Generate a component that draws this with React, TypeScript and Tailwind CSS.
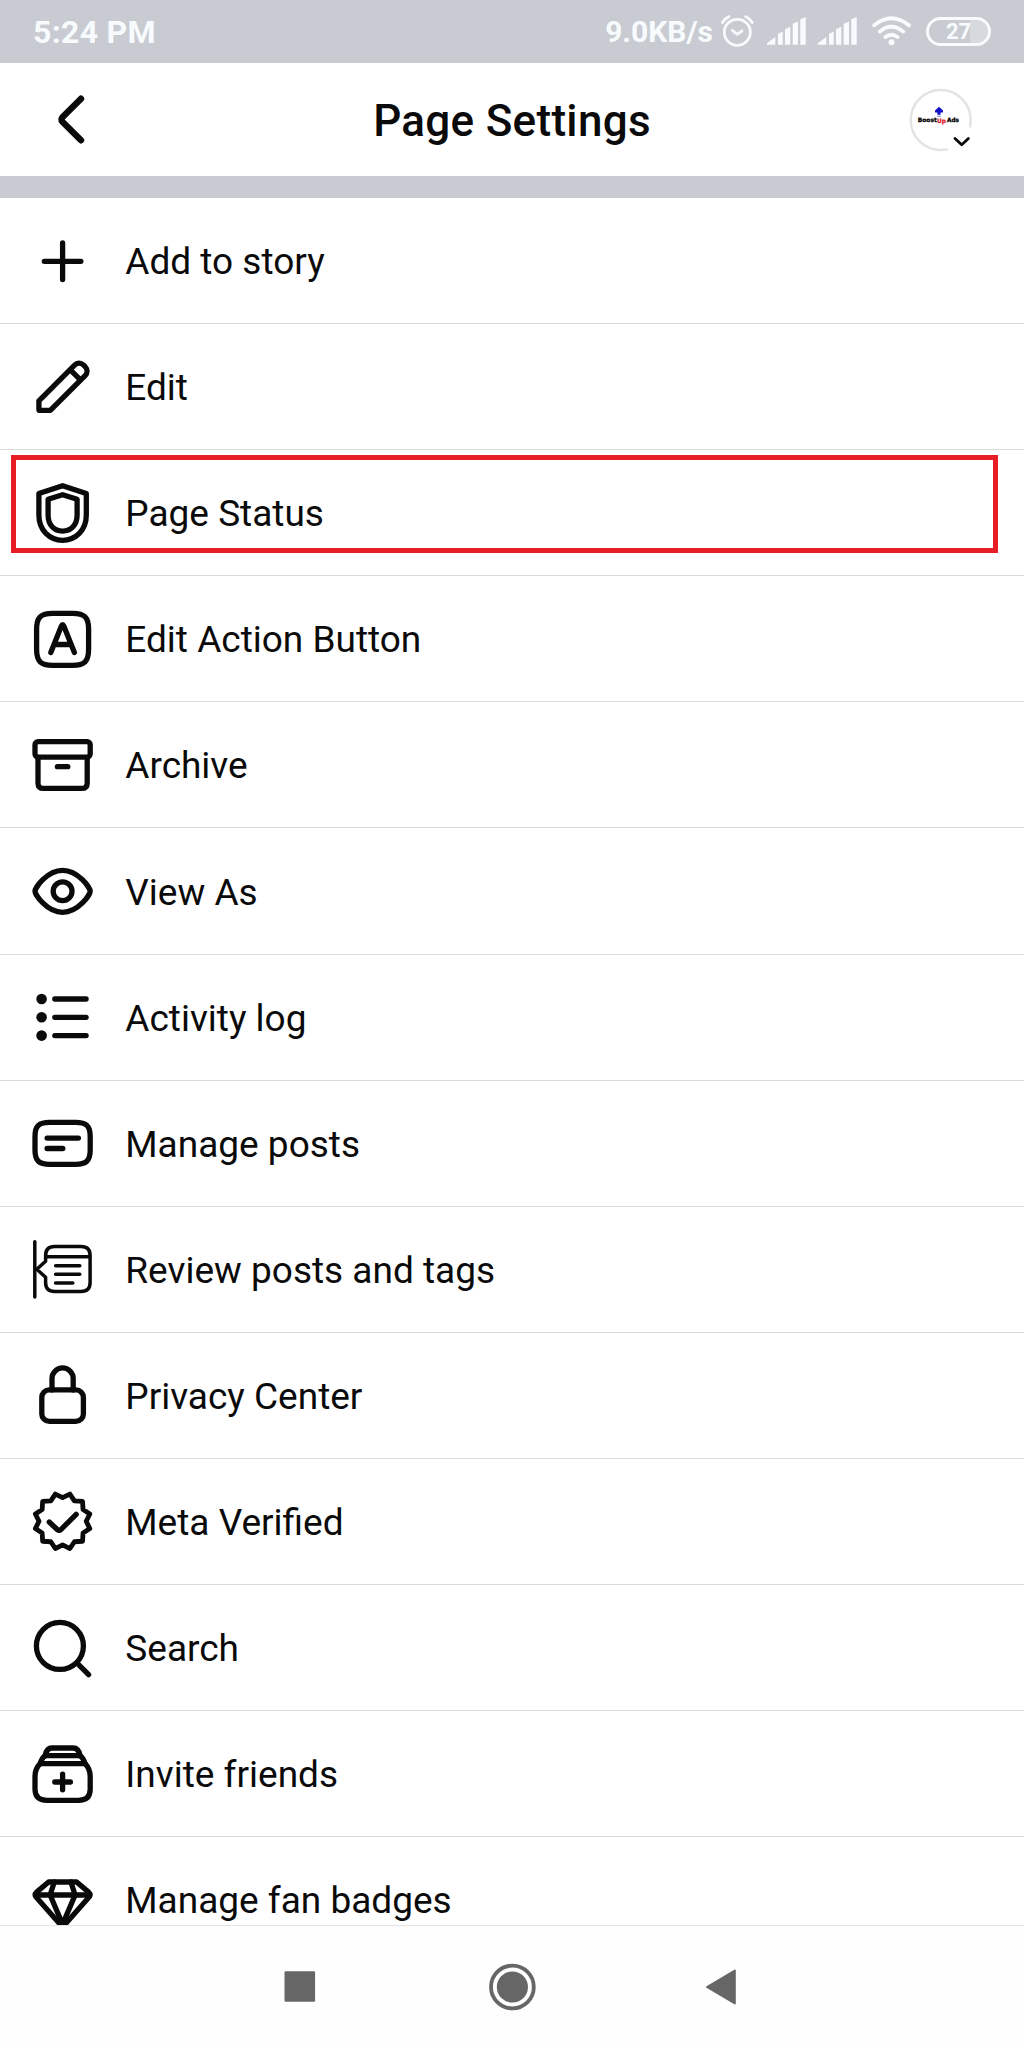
import type { ReactNode } from "react";

/* Scalloped outline of the verified badge: twelve tips, twelve valleys. */
const badgePoints = Array.from({ length: 24 }, (_, i) => {
  const r = i % 2 === 0 ? 23.6 : 28.2;
  const a = (i * 15 * Math.PI) / 180;
  return `${(r * Math.sin(a)).toFixed(2)},${(-r * Math.cos(a)).toFixed(2)}`;
}).join(" ");

function Icon({ children, stroke = 5.3 }: { children: ReactNode; stroke?: number }) {
  return (
    <svg
      viewBox="-35.6 -36.3 72 72"
      className="h-[72px] w-[72px] shrink-0 text-[#0a0a0a]"
      fill="none"
      stroke="currentColor"
      strokeWidth={stroke}
      strokeLinecap="round"
      strokeLinejoin="round"
    >
      {children}
    </svg>
  );
}

const rows: { label: string; icon: ReactNode; highlighted?: boolean }[] = [
  {
    label: "Add to story",
    icon: (
      <Icon>
        <path d="M-18.3 0H18.3M0-18.3V18.3" />
      </Icon>
    ),
  },
  {
    label: "Edit",
    icon: (
      <Icon>
        <path d="M-23.7 22.1V13.5L12-22.2C14.5-24.7 18-25 20.8-22.4L22.6-20.6C25.2-17.8 25-14.2 22.5-11.7L-12.3 23.1H-22.7Q-23.7 23.1-23.7 22.1Z" />
        <path d="M8-17.2L17.5-7.7" />
      </Icon>
    ),
  },
  {
    label: "Page Status",
    highlighted: true,
    icon: (
      <Icon>
        <path d="M0-27.6L23.7-19.7V2C23.7 17 13 27 0 27S-23.7 17-23.7 2V-19.7Z" />
        <path d="M0-18.6L14.5-14.1V2C14.5 11.5 8.5 17.8 0 17.8S-14.5 11.5-14.5 2V-14.1Z" />
      </Icon>
    ),
  },
  {
    label: "Edit Action Button",
    icon: (
      <Icon>
        <path d="M-26-10C-26-22-22-26-10-26H10C22-26 26-22 26-10V10C26 22 22 26 10 26H-10C-22 26-26 22-26 10Z" />
        <path d="M-11.8 13.3L-1.2-13.3Q0-16 1.2-13.3L11.8 13.3M-8.2 5.2H8.2" />
      </Icon>
    ),
  },
  {
    label: "Archive",
    icon: (
      <Icon>
        <rect x="-27.6" y="-23.6" width="55.2" height="15.4" rx="3" />
        <path d="M-24.6-8V17.6Q-24.6 23.1-19 23.1H19Q24.6 23.1 24.6 17.6V-8M-5.2 1.4H5.2" />
      </Icon>
    ),
  },
  {
    label: "View As",
    icon: (
      <Icon>
        <path d="M-27.6 0C-27.6-3-16-21 0-21S27.6-3 27.6 0 16 21 0 21-27.6 3-27.6 0Z" />
        <circle r="9.4" />
      </Icon>
    ),
  },
  {
    label: "Activity log",
    icon: (
      <Icon>
        <g fill="currentColor" stroke="none">
          <circle cx="-21" cy="-18.3" r="5.3" />
          <circle cx="-21" cy="0" r="5.3" />
          <circle cx="-21" cy="18.3" r="5.3" />
        </g>
        <path d="M-7.8-18.3H23.5M-7.8 0H23.5M-7.8 18.3H23.5" />
      </Icon>
    ),
  },
  {
    label: "Manage posts",
    icon: (
      <Icon>
        <path d="M-27.6-7C-27.6-17.5-23.5-21-13-21H13C23.5-21 27.6-17.5 27.6-7V7C27.6 17.5 23.5 21 13 21H-13C-23.5 21-27.6 17.5-27.6 7Z" />
        <path d="M-15.5-5.2H15.8M-15.5 5.2H.2" />
      </Icon>
    ),
  },
  {
    label: "Review posts and tags",
    icon: (
      <Icon stroke={3.5}>
        <path d="M-27.8-27.6V27.6" />
        <path d="M-17-12.6V-8L-25.8 0L-17 8V13.3Q-17 22.3-8 22.3H18.5Q27.5 22.3 27.5 13.3V-13.8Q27.5-22.8 18.5-22.8H-8Q-17-22.8-17-13.8V-12.6H27.5" />
        <path d="M-7-3.6H17.2M-7 5H17.2M-7 13.7H10.2" />
      </Icon>
    ),
  },
  {
    label: "Privacy Center",
    icon: (
      <Icon>
        <rect x="-20.8" y="-5.4" width="41.6" height="31.5" rx="7.5" />
        <path d="M-10.6-5.4V-16.8a10.6 10.6 0 0 1 21.2 0V-5.4" />
      </Icon>
    ),
  },
  {
    label: "Meta Verified",
    icon: (
      <Icon>
        <polygon points={badgePoints} strokeWidth={4.8} />
        <path d="M-13.4.7L-5.4 8.2Q-3.5 9.8-1.6 8.2L13.6-7" />
      </Icon>
    ),
  },
  {
    label: "Search",
    icon: (
      <Icon>
        <circle cx="-2.7" cy="-2.4" r="23.5" />
        <path d="M14.5 14.8L26 26.3" />
      </Icon>
    ),
  },
  {
    label: "Invite friends",
    icon: (
      <Icon>
        <path d="M-22.5-10.6C-26-7-27.6-3-27.6 2V15C-27.6 22.5-23.5 26-16 26H16C23.5 26 27.6 22.5 27.6 15V2C27.6-3 26-7 22.5-10.6Z" />
        <path d="M-22.5-10.6C-21.5-14-20-17-17.5-18.6H17.5C20-17 21.5-14 22.5-10.6" />
        <path d="M-17.5-18.6C-16.5-24-14-26.3-10.5-26.3H10.5C14-26.3 16.5-24 17.5-18.6" />
        <path d="M-7.8 7.7H7.8M0-.1V15.5" />
      </Icon>
    ),
  },
  {
    label: "Manage fan badges",
    icon: (
      <Icon>
        <path d="M-14-18.3H14L26-8.2Q28.5-5.8 26.5-3.2L3 23.4Q0 26.5-3 23.4L-26.5-3.2Q-28.5-5.8-26-8.2Z" />
        <path d="M-27-5.3H27M-8.3-18.3L-12.5-5.3L0 24L12.5-5.3L8.3-18.3" />
      </Icon>
    ),
  },
];

function SignalBars({ className }: { className: string }) {
  return (
    <svg viewBox="0 0 39 28" className={className} fill="currentColor">
      <path d="M0 27.7V26L8.3 20V27.7ZM11 27.7V17L15.7 14.5V27.7ZM18 27.7V12.2L23.3 9.8V27.7ZM25.7 27.7V6.8L31 4.4V27.7ZM33.3 27.7V2.2L38.7 0V27.7Z" />
    </svg>
  );
}

function StatusBar() {
  return (
    <div className="flex h-[62.5px] items-center justify-between bg-[#c8cbd1] pr-[33px] pl-[33px] text-[#f8fbfd]">
      <span className="mt-[2px] text-[32px] leading-none font-bold tracking-[0.3px]">5:24 PM</span>
      <div className="flex items-center">
        <span className="mt-[2px] text-[30px] leading-none font-bold">9.0KB/s</span>
        <svg
          viewBox="0 0 36 36"
          className="ml-[7px] h-9 w-9"
          fill="none"
          stroke="currentColor"
          strokeWidth="2.8"
          strokeLinecap="round"
          strokeLinejoin="round"
        >
          <circle cx="17.3" cy="19.3" r="13" />
          <path d="M12.5 17.5L17 21.3L22 18M2.4 9.5Q5 5.5 9 3.6M32.2 9.5Q29.6 5.5 25.6 3.6" />
        </svg>
        <SignalBars className="ml-[10.7px] h-7 w-[39px]" />
        <SignalBars className="ml-3 h-7 w-[39px]" />
        <svg
          viewBox="0 0 40 30"
          className="ml-[15.3px] h-[30px] w-10"
          fill="none"
          stroke="currentColor"
          strokeWidth="3.8"
          strokeLinecap="round"
        >
          <path d="M2.2 9.3Q19.3-4.8 37 9.3M7.8 15.6Q19.3 5.8 31.2 15.6M13.4 21Q19.3 16.4 25.4 21" />
          <circle cx="19.5" cy="26.3" r="3" fill="currentColor" stroke="none" />
        </svg>
        <div className="ml-[14px] flex h-[29px] w-[65px] items-center justify-center rounded-full border-[3px] border-[#f8fbfd] bg-linear-to-r from-transparent from-70% to-[#d6d9dd] to-70%">
          <span className="mt-[2px] text-[22px] leading-none font-bold">27</span>
        </div>
      </div>
    </div>
  );
}

function Avatar() {
  return (
    <svg viewBox="0 0 72 72" className="h-[72px] w-[72px]">
      <circle cx="34.7" cy="36" r="30" fill="#fff" stroke="#e3e3e5" strokeWidth="2.4" />
      <path d="M33 22.8L37 26.6V28.4H34.6V30.8H31.4V28.4H29V26.6Z" fill="#1010c8" />
      <path d="M31 32.2H35" stroke="#8080e0" strokeWidth="1" />
      <g fontFamily="'DejaVu Sans', sans-serif" fontWeight="700" fontSize="6" strokeWidth="0.3">
        <text x="11.8" y="38.4" textLength="19" lengthAdjust="spacingAndGlyphs" fill="#000" stroke="#000">
          Boost
        </text>
        <text x="31" y="39.2" textLength="9" lengthAdjust="spacingAndGlyphs" fill="#e0202c" stroke="#e0202c">
          Up
        </text>
        <text x="41" y="38.4" textLength="12" lengthAdjust="spacingAndGlyphs" fill="#000" stroke="#000">
          Ads
        </text>
      </g>
      <circle cx="55.7" cy="57.2" r="16" fill="#fff" />
      <path
        d="M49 54.5L55.7 60.7L62.4 54.5"
        fill="none"
        stroke="#0a0a0a"
        strokeWidth="2.8"
        strokeLinecap="round"
        strokeLinejoin="round"
      />
    </svg>
  );
}

function Header() {
  return (
    <header className="grid h-[113.5px] grid-cols-[120px_1fr_120px] items-center bg-white">
      <svg
        viewBox="0 0.5 40 60"
        className="mt-px ml-[52px] h-[60px] w-10"
        fill="none"
        stroke="#0a0a0a"
        strokeWidth="6.4"
        strokeLinecap="round"
        strokeLinejoin="round"
      >
        <path d="M29 9.2L10.4 27.8Q8.6 30 10.4 32.2L29 50.8" />
      </svg>
      <h1 className="mt-[3px] text-center text-[44px] leading-none font-medium tracking-[0.3px] text-[#0a0a0a]">
        Page Settings
      </h1>
      <div className="mt-[2px] ml-[2px]">
        <Avatar />
      </div>
    </header>
  );
}

function NavBar() {
  return (
    <nav className="flex h-[123px] items-center justify-center gap-[164px] border-t border-[#e4e4e4] bg-[#fefefe] text-[#666666]">
      <svg viewBox="-24 -24 48 48" className="h-12 w-12" fill="currentColor">
        <rect x="-15.5" y="-15.8" width="30.6" height="30.6" rx="1.2" />
      </svg>
      <svg viewBox="-24 -24 48 48" className="h-12 w-12">
        <circle cx="0.4" r="21.4" fill="none" stroke="currentColor" strokeWidth="3.8" />
        <circle cx="0.4" r="15.6" fill="currentColor" />
      </svg>
      <svg
        viewBox="-24 -24 48 48"
        className="h-12 w-12"
        fill="currentColor"
        stroke="currentColor"
        strokeWidth="2"
        strokeLinejoin="round"
      >
        <path d="M-17 0L10.8-16.4V16.4Z" />
      </svg>
    </nav>
  );
}

export default function App() {
  return (
    <div className="flex h-[2048px] w-[1024px] flex-col overflow-hidden bg-white font-['Roboto',sans-serif]">
      <StatusBar />
      <Header />
      <div className="h-[22px] shrink-0 bg-[#c8cbd1]" />
      <ul className="min-h-0 flex-1 overflow-hidden">
        {rows.map((row) => (
          <li
            key={row.label}
            className="relative flex h-[126.1px] items-center gap-[26.3px] border-b border-[#dadada] pl-[27px]"
          >
            {row.icon}
            <span className="mt-[2px] text-[37px] leading-none text-[#0a0a0a]">{row.label}</span>
            {row.highlighted && (
              <div className="absolute top-[5px] right-[26px] left-[11px] h-[98px] border-[5px] border-[#e81e25]" />
            )}
          </li>
        ))}
      </ul>
      <NavBar />
    </div>
  );
}
